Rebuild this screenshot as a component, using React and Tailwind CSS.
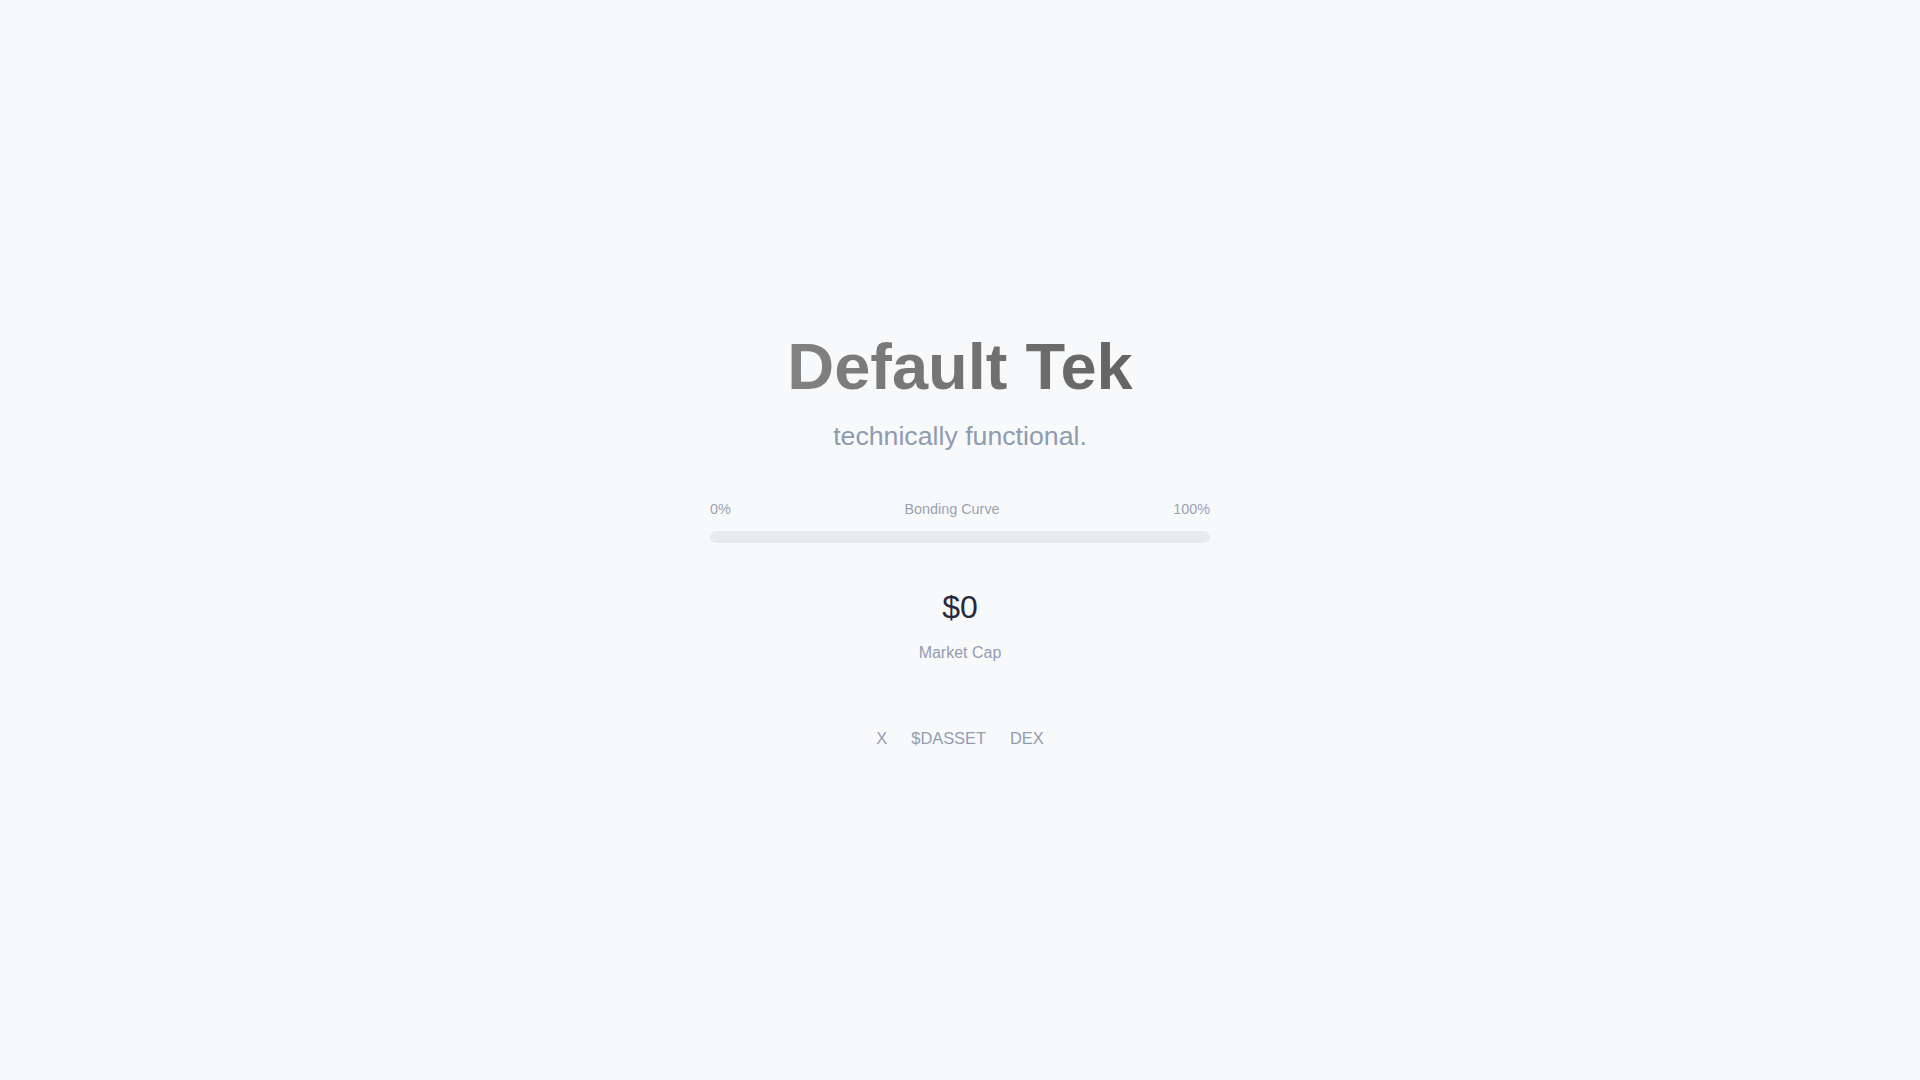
export default function App() {
  const progress = 0;
  const links = ["X", "$DASSET", "DEX"];

  return (
    <div
      className="min-h-screen bg-[#f8f9fb] flex items-center justify-center"
      style={{ fontFamily: '"Liberation Sans", Arial, sans-serif' }}
    >
      <div className="flex flex-col items-center pt-[4px]">
        <h1 className="text-[65px] leading-[64px] font-bold bg-linear-to-r from-[#828282] to-[#646464] bg-clip-text text-transparent">
          Default Tek
        </h1>
        <p className="mt-[21px] text-[26.7px] leading-[32px] text-[#8e9bb1]">
          technically functional.
        </p>

        {/* bonding curve */}
        <div className="mt-[47px] w-[500px]">
          <div className="flex justify-between text-[14.4px] leading-5 text-[#9aa2b3]">
            <span>0%</span>
            <span>Bonding Curve</span>
            <span>100%</span>
          </div>
          <div className="mt-3 h-3 w-full rounded-full bg-[#e8eaee] overflow-hidden">
            <div
              className="h-full rounded-full bg-[#9aa2b3]"
              style={{ width: `${progress}%` }}
            />
          </div>
        </div>

        <div className="mt-[44px] flex flex-col items-center">
          <div className="text-[32px] leading-[40px] text-[#262a3a]">$0</div>
          <div className="mt-[14px] text-base text-[#939db1]">Market Cap</div>
        </div>

        <div className="mt-[61px] flex gap-6 text-[16.4px] leading-6 text-[#939db1]">
          {links.map((l) => (
            <a key={l} href="#" className="hover:text-[#6b7280]">
              {l}
            </a>
          ))}
        </div>
      </div>
    </div>
  );
}
